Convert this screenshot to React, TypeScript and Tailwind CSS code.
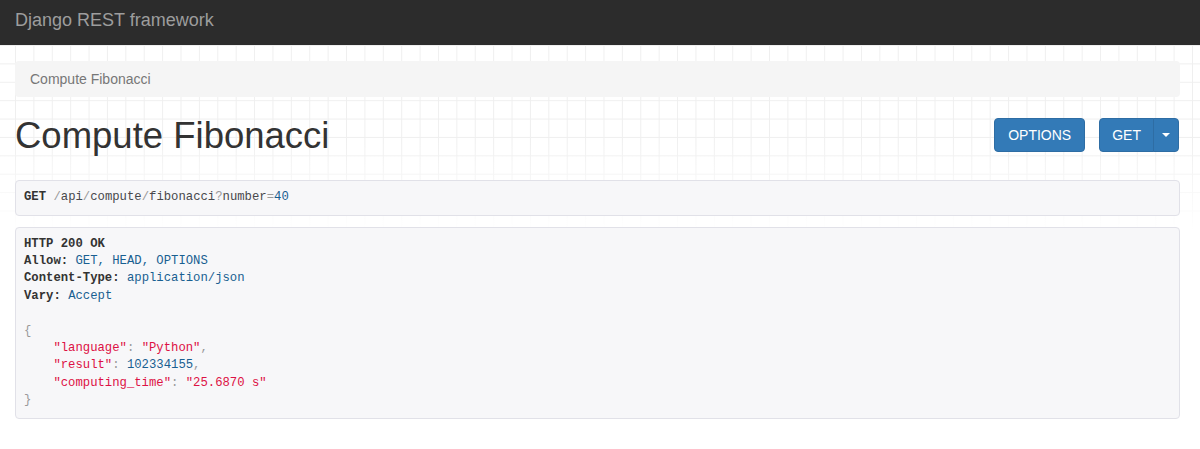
const pun = "text-[#999]";
const pln = "text-[#48484c]";
const lit = "text-[#195f91]";
const str = "text-[#dd1144]";

const Header = ({ name, value }: { name: string; value: string }) => (
  <div>
    <b className="text-[#333]">{name}:</b> <span className={lit}>{value}</span>
  </div>
);

const App = () => {
  return (
    <div className="min-h-screen bg-white font-['Liberation_Sans',Arial,sans-serif] text-[#333]">
      <nav className="h-[45px] bg-[#2c2c2c] px-[15px] pt-[9px]">
        <span className="text-[18px] leading-[20px] text-[#9d9d9d]">Django REST framework</span>
      </nav>

      <div className="bg-white [background-image:linear-gradient(to_bottom,rgba(255,255,255,0)_0px,rgba(255,255,255,0)_95px,#fff_185px),linear-gradient(to_right,#efefef_1px,transparent_1px),linear-gradient(to_bottom,#efefef_1px,transparent_1px)] [background-size:100%_100%,18.4px_18.4px,18.4px_18.4px] [background-position:0_0,15px_0,15px_0]">
        <div className="px-[15px] pt-[16px] pb-[30px] w-[1195px]">
          <div className="h-[36px] rounded bg-[#f5f5f5] px-[15px] py-2 text-[14px] leading-[20px] text-[#777]">
            Compute Fibonacci
          </div>

          <div className="mt-[19px] flex items-start justify-between">
            <h1 className="text-[36.5px] leading-[39.6px] font-normal text-[#333]">Compute Fibonacci</h1>
            <div className="mt-[2px] flex items-start gap-[14px] pr-px text-[14px] leading-[20px] text-white">
              <button className="h-[34px] rounded border border-[#2e6da4] bg-[#337ab7] px-[13px]">OPTIONS</button>
              <div className="flex">
                <button className="h-[34px] rounded-l border border-[#2e6da4] bg-[#337ab7] px-3">GET</button>
                <button className="-ml-px flex h-[34px] w-[26px] items-center justify-center rounded-r border border-[#2e6da4] bg-[#337ab7]">
                  <span className="h-0 w-0 border-x-4 border-t-4 border-x-transparent border-t-white" />
                </button>
              </div>
            </div>
          </div>

          <div className="mt-[24px] rounded border border-[#e1e1e8] bg-[#f7f7f9] px-2 py-[8.3px] font-['Liberation_Mono',monospace] text-[12.25px] leading-[17.4px] whitespace-pre">
            <b className="text-[#333]">GET</b>{" "}
            <span className={pun}>/</span>
            <span className={pln}>api</span>
            <span className={pun}>/</span>
            <span className={pln}>compute</span>
            <span className={pun}>/</span>
            <span className={pln}>fibonacci</span>
            <span className={pun}>?</span>
            <span className={pln}>number</span>
            <span className={pun}>=</span>
            <span className={lit}>40</span>
          </div>

          <div className="mt-[11px] rounded border border-[#e1e1e8] bg-[#f7f7f9] p-2 font-['Liberation_Mono',monospace] text-[12.25px] leading-[17.4px] whitespace-pre">
            <div>
              <b className="text-[#333]">HTTP 200 OK</b>
            </div>
            <Header name="Allow" value="GET, HEAD, OPTIONS" />
            <Header name="Content-Type" value="application/json" />
            <Header name="Vary" value="Accept" />
            <div>{" "}</div>
            <div className={pun}>{"{"}</div>
            <div>
              {"    "}
              <span className={str}>"language"</span>
              <span className={pun}>: </span>
              <span className={str}>"Python"</span>
              <span className={pun}>,</span>
            </div>
            <div>
              {"    "}
              <span className={str}>"result"</span>
              <span className={pun}>: </span>
              <span className={lit}>102334155</span>
              <span className={pun}>,</span>
            </div>
            <div>
              {"    "}
              <span className={str}>"computing_time"</span>
              <span className={pun}>: </span>
              <span className={str}>"25.6870 s"</span>
            </div>
            <div className={pun}>{"}"}</div>
          </div>
        </div>
      </div>
    </div>
  );
};

export default App;
